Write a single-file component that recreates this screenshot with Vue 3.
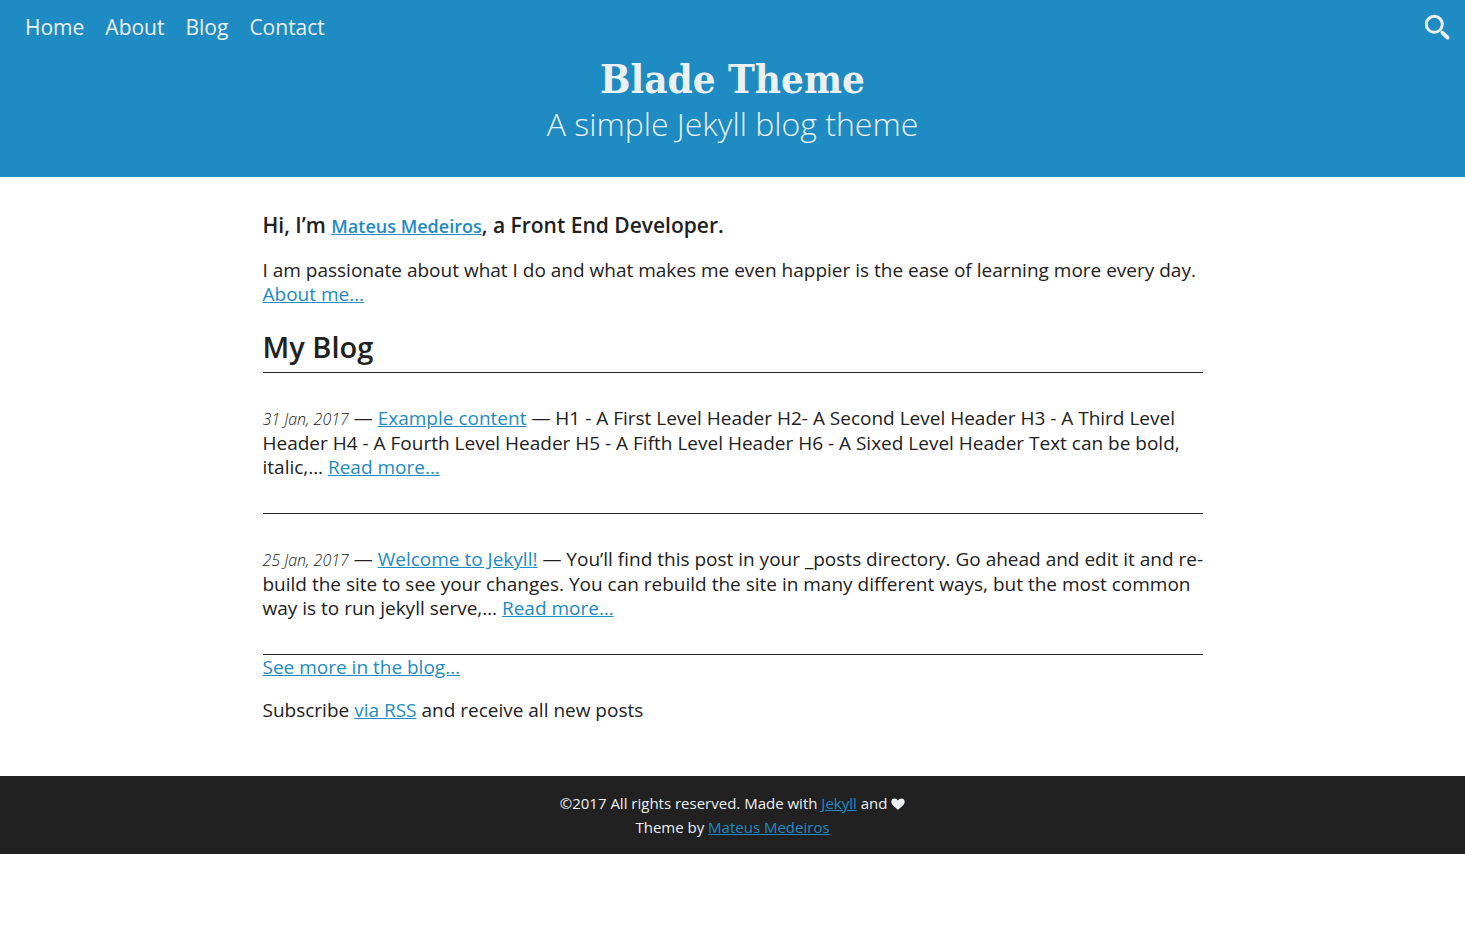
<script setup>
const links = ['Home', 'About', 'Blog', 'Contact']
const posts = [
  { date: '31 Jan, 2017', title: 'Example content', text: 'H1 - A First Level Header H2- A Second Level Header H3 - A Third Level Header H4 - A Fourth Level Header H5 - A Fifth Level Header H6 - A Sixed Level Header Text can be bold, italic,…' },
  { date: '25 Jan, 2017', title: 'Welcome to Jekyll!', text: 'You’ll find this post in your _posts directory. Go ahead and edit it and re\u00adbuild the site to see your changes. You can rebuild the site in many different ways, but the most common way is to run jekyll serve,…' },
]
</script>

<template>
  <header class="top">
    <div class="bar">
      <nav><a v-for="l in links" :key="l" href="#">{{ l }}</a></nav>
      <button class="search" aria-label="Search">
        <svg viewBox="0 0 26 26" width="26" height="26">
          <circle cx="10.300" cy="10.300" r="8" fill="none" stroke="currentColor" stroke-width="3" />
          <path d="M16.200 18.300L17.900 16.500C20.500 17.500 23.500 20.500 25.200 22.600C26.300 24.500 24.300 26.300 22.500 25.200C20.200 23.500 17.300 20.800 16.200 18.300Z" fill="currentColor" />
        </svg>
      </button>
    </div>
    <h1>Blade Theme</h1>
    <p class="tagline">A simple Jekyll blog theme</p>
  </header>
  <main>
    <h3>Hi, I’m <a href="#">Mateus Medeiros</a>, a Front End Developer.</h3>
    <p>I am passionate about what I do and what makes me even happier is the ease of learning more every day. <a href="#">About me…</a></p>
    <h2>My Blog</h2>
    <article v-for="p in posts" :key="p.date">
      <p class="excerpt"><time>{{ p.date }}</time> — <a href="#">{{ p.title }}</a> — {{ p.text }} <a href="#">Read more…</a></p>
    </article>
    <a href="#">See more in the blog…</a>
    <p class="rss">Subscribe <a href="#">via RSS</a> and receive all new posts</p>
  </main>
  <footer>
    <p>©2017 All rights reserved. Made with <a href="#">Jekyll</a> and
      <svg class="heart" viewBox="0 0 14 12" width="14" height="12" role="img" aria-label="love"><path fill="currentColor" d="M7 12C5 9.500.3 7.500.3 3.800C.3-.2 5.200-.7 7 2.500C8.800-.7 13.700-.2 13.700 3.800C13.700 7.500 9 9.500 7 12Z" /></svg>
    </p>
    <p>Theme by <a href="#">Mateus Medeiros</a></p>
  </footer>
</template>

<style>
body { margin: 0; background: #fff; }
</style>

<style scoped>
.top, main, footer { font-family: "Open Sans", sans-serif; }
.top { background: #1e8bc3; color: #ecf0f1; padding-bottom: 33px; text-align: center; }
.bar { display: flex; justify-content: space-between; align-items: center; height: 54px; padding: 0 15px 0 25px; }
nav { display: flex; gap: 21px; font-size: 21px; }
nav a { color: inherit; text-decoration: none; }
.search { border: 0; padding: 0; background: none; color: #ecf0f1; display: flex; cursor: pointer; }
h1 { margin: 0; font-family: "Roboto Slab", "DejaVu Serif Condensed", "DejaVu Serif", serif; font-size: 40px; line-height: 50px; font-weight: 700; }
p { margin: 0; }
.tagline { font-size: 32px; line-height: 40px; font-weight: 300; }
main { max-width: 940px; margin: 0 auto; padding: 36px 24px 54px; font-size: 19px; line-height: 24px; color: #212121; }
a { color: #1e8bc3; }
h3 { margin: 0 0 20px; font-size: 21px; font-weight: 600; }
h3 a { font-size: 18px; }
h2 { margin: 23px 0 0; padding-bottom: 7px; font-size: 29px; line-height: 36px; font-weight: 600; border-bottom: 1px solid #212121; }
article { padding: 33px 0 34px; border-bottom: 1px solid #212121; }
.excerpt { margin-right: -8px; }
time { font-size: 16px; font-style: italic; font-weight: 300; }
.rss { margin-top: 19px; }
footer { background: #212121; color: #ecf0f1; padding: 15px 24px; text-align: center; font-size: 15px; line-height: 24px; }
.heart { vertical-align: -1px; }
</style>
